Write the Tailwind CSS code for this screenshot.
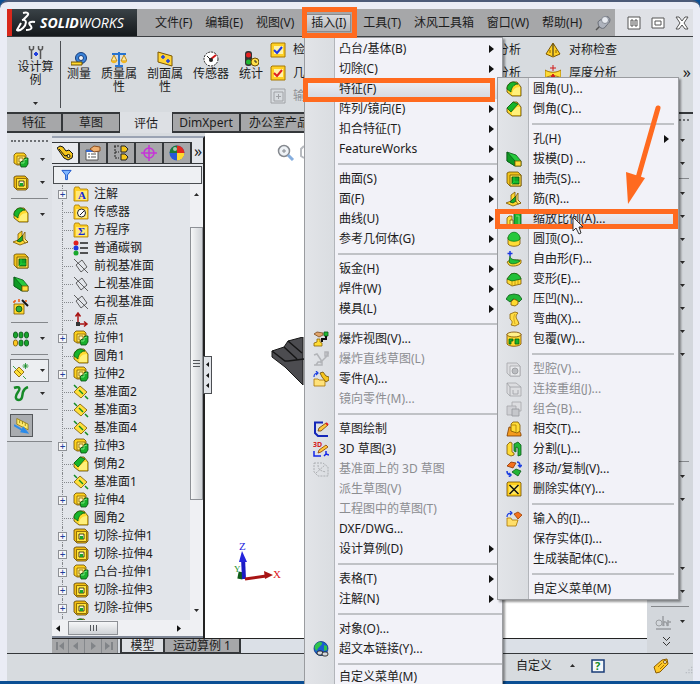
<!DOCTYPE html>
<html lang="zh-CN">
<head>
  <meta charset="UTF-8">
  <meta name="viewport" content="width=device-width, initial-scale=1.0">
  <title>SolidWorks</title>
  <script src="https://cdn.jsdelivr.net/npm/@tailwindcss/browser@4"></script>
</head>
<body class="bg-[#0b4f94] font-['Noto_Sans','Noto_Sans_CJK_SC',sans-serif] text-xs text-[#1c1c1c] [&_use]:[stroke-width:0.8]">

  <!-- Icon library -->
  <svg class="hidden" aria-hidden="true">
    <symbol id="boss" viewBox="0 0 16 16"><path d="M1 3l2-2h8l2 2v7l-2 3H4l-3-2z" fill="#ffd21e" stroke="#6b4b00"/><path d="M4 4h8v8H4z" fill="#ffea6a" stroke="#8b6200"/><path d="M6 6h4v4H6z" fill="#fff8c0" stroke="#8b6200"/><path d="M7 11l2-2h2V7l1-1h3v6l-2 3H8z" fill="#18b02c" stroke="#064d10"/><path d="M8 11h3V8l3-1" fill="none" stroke="#8df08f"/></symbol>
    <symbol id="cut" viewBox="0 0 16 16"><path d="M1 2l2-1h9l3 3v9l-2 2H4l-3-3z" fill="#f2bd14" stroke="#5e4200"/><path d="M3.500 3.500h10v10h-10z" fill="#ffe43c" stroke="#7a5800"/><path d="M6 6h5v5H6z" fill="#fffbd0" stroke="#1f1a00"/><path d="M7 8h3v3H7z" fill="#18a62c"/></symbol>
    <symbol id="fillet" viewBox="0 0 16 16"><path d="M1 7c0-3 3-6 6-6h4l4 5v9H6l-5-4z" fill="#ffd92e" stroke="#5b4500"/><path d="M1 8c0-4 3-7 7-7l4 2C8 3 5 7 5 11z" fill="#17b52b" stroke="#075f12"/><path d="M6 14c0-5 3-8 8-8v8z" fill="#fff07a"/></symbol>
    <symbol id="chamfer" viewBox="0 0 16 16"><path d="M1 7L7 1h4l4 5v9H6l-5-4z" fill="#ffd92e" stroke="#5b4500"/><path d="M1 7l6-6 5 2-7 8z" fill="#17b52b" stroke="#075f12"/><path d="M6 14v-3l5-5h3v8z" fill="#fff07a"/></symbol>
    <symbol id="draft" viewBox="0 0 16 16"><path d="M1 1l9 3 5 6v5H9l-8-5z" fill="#27cb3d" stroke="#0a5b16"/><path d="M1 1l8 9v5l-8-5z" fill="#0e9a23" stroke="#0a5b16"/><path d="M9 10h6v5H9z" fill="#ffdf3b" stroke="#7a5600"/></symbol>
    <symbol id="shell" viewBox="0 0 16 16"><path d="M1 2l2-1h9l3 3v11H4l-3-3z" fill="#f2c41c" stroke="#6e5000"/><path d="M4 4h11v11H4z" fill="#ffe14a" stroke="#6e5000"/><path d="M6 6h7v7H6z" fill="#12a526" stroke="#064f10"/><path d="M8 6v5l-2 2m2-2h5" stroke="#1fe03c" fill="none"/></symbol>
    <symbol id="rib" viewBox="0 0 16 16"><path d="M0 12l5-2V4l4-3v9l3-1 3 3-8 3z" fill="#ffd731" stroke="#7b5600"/><path d="M4 11l6-6v5l-3 2z" fill="#17ad2b" stroke="#075314"/><path d="M10 5l2-3v7l3 3-3 1-2-3z" fill="#ffe978" stroke="#7b5600"/></symbol>
    <symbol id="scale" viewBox="0 0 16 16"><path d="M1 7l2-2h3v9H1z" fill="#ffdf3b" stroke="#7b5600"/><path d="M4 9h3v5H4z" fill="#fff6a8" stroke="#7b5600"/><path d="M8 3l2-2h5v12l-2 2H8z" fill="#1db532" stroke="#075314"/><path d="M10 5h3v9" fill="none" stroke="#8af08f"/></symbol>
    <symbol id="dome" viewBox="0 0 16 16"><path d="M2 6v7c2 3 10 3 12 0V6z" fill="#ffdc36" stroke="#7b5600"/><path d="M2 8c0-9 12-9 12 0-2 3-10 3-12 0z" fill="#25c83b" stroke="#0b7a1a"/></symbol>
    <symbol id="freeform" viewBox="0 0 16 16"><path d="M1 11l3-2h11v3c-2 3-9 4-12 2z" fill="#ffdc36" stroke="#7b5600"/><path d="M4 5c0 3 3 4 8 4l2 1c-3 3-9 4-11 1z" fill="#20c038" stroke="#0b6619"/><path d="M4 0v5M1.500 2.500h5" stroke="#1a35e0" stroke-width="1.500"/></symbol>
    <symbol id="deform" viewBox="0 0 16 16"><path d="M1 8l4-5c5-2 9 1 10 5v5l-9 2-5-3z" fill="#ffdc36" stroke="#7b5600"/><path d="M1 8l4-5c5-2 9 1 10 5l-9 2z" fill="#20c038" stroke="#0b6619"/><path d="M6 10v4M9 10v4M12 9v4" stroke="#b88a00"/></symbol>
    <symbol id="indent" viewBox="0 0 16 16"><path d="M0 8l3-4 5-1 5 1 3 4-3 3-3-2-3-1-3 3z" fill="#22b637" stroke="#0a5b17"/><path d="M5 11l3-3 4 2v3l-3 2-4-1z" fill="#ffd92e" stroke="#7b5600"/></symbol>
    <symbol id="flex" viewBox="0 0 16 16"><path d="M4 3l5-2 3 1c-3 3-2 5 0 8l1 3-4 2-4-1c2-3 1-4-1-6z" fill="#ffdc46" stroke="#8b6200"/><path d="M9 3c-2 3-1 6 0 10" fill="none" stroke="#c99a10"/></symbol>
    <symbol id="wrap" viewBox="0 0 16 16"><path d="M1 3v10c2 3 12 3 14 0V3z" fill="#ffd92e" stroke="#7b4a00"/><ellipse cx="8" cy="3.500" rx="7" ry="2.500" fill="#fff08a" stroke="#7b4a00"/><path d="M3 8h4v2H5v3H3zM9 8h4v5H9z" fill="#17b52b" stroke="#075f12"/></symbol>
    <symbol id="cavity" viewBox="0 0 16 16"><path d="M1 2h10l3 3v10H4l-3-3z" fill="#dcdde0" stroke="#a4a6aa"/><path d="M4 5h10v10H4z" fill="#e8e9ec" stroke="#a4a6aa"/><circle cx="9" cy="10" r="3" fill="#bbbdc1" stroke="#96989c"/></symbol>
    <symbol id="rejoin" viewBox="0 0 16 16"><path d="M1 2h9l5 4v9H4l-3-3z" fill="#dcdde0" stroke="#a4a6aa"/><path d="M4 6v9M1 2l3 4h11M7 9v4h5V9" fill="none" stroke="#9d9fa3"/></symbol>
    <symbol id="combine" viewBox="0 0 16 16"><path d="M6 1h9v9H6z" fill="#dcdde0" stroke="#a4a6aa"/><path d="M1 5h9v9H1z" fill="#d0d1d5" stroke="#a4a6aa"/><path d="M6 8h7v7H6z" fill="#c5c7cb" stroke="#96989c"/></symbol>
    <symbol id="intersect" viewBox="0 0 16 16"><path d="M1 15l2-9 9 1 3 6v2z" fill="#f49b1d" stroke="#7b3a00"/><path d="M5 3l2-2h5l2 3v6l-3 2-6-2z" fill="#ffdc36" stroke="#7b5600"/><path d="M5 4h5v7" fill="none" stroke="#a97a00"/></symbol>
    <symbol id="split" viewBox="0 0 16 16"><path d="M1 4l3-3 2 1v9l2 1v2l-3 1-4-2z" fill="#ffdc36" stroke="#7b5600"/><path d="M8 3l4-2 3 3v10l-3 1V7l-2-1v5L8 10z" fill="#22b637" stroke="#0a5b17"/></symbol>
    <symbol id="move" viewBox="0 0 16 16"><path d="M1 5l4-4 5 1-3 5z" fill="#f4701d" stroke="#8d3500"/><path d="M6 11l4-3 5 2-3 5z" fill="#22b637" stroke="#0a5b17"/><path d="M11 1c2 0 3 2 3 4m-2-1l2 2 2-2M1 10c0 3 1 4 4 4m-2-2l2 2-2 2" fill="none" stroke="#1d3fe0" stroke-width="1.500"/></symbol>
    <symbol id="delete" viewBox="0 0 16 16"><path d="M1 2l1-1h12l1 1v13H1z" fill="#ffcf1f" stroke="#6e4c00"/><path d="M3 4h10v9H3z" fill="#ffe65c"/><path d="M3.500 4l9 9m0-9l-9 9" stroke="#111" stroke-width="1.500"/></symbol>
    <symbol id="import" viewBox="0 0 16 16"><path d="M1 7h4l1 2h6l-2 6H1z" fill="#ffdf6a" stroke="#a87400"/><path d="M8 3l4-2 4 3-4 4z" fill="#f4701d" stroke="#9b3c00"/><path d="M1 6c0-3 2-4 5-4M4 0l2 2-2 2" fill="none" stroke="#1d3fe0" stroke-width="1.200"/></symbol>
    <symbol id="explode" viewBox="0 0 16 16"><path d="M1 3l3-2 6 1v2l-4 2z" fill="#e0a46a" stroke="#7b4a20"/><path d="M11 1h4v4h-4z" fill="#1fb935" stroke="#0a5b17"/><path d="M13 5v3H9v3" fill="none" stroke="#111" stroke-width="2"/><path d="M1 12l3-1V8h3v3l2 1v3H1z" fill="#ffdc36" stroke="#8b6200"/></symbol>
    <symbol id="explode-line" viewBox="0 0 16 16"><path d="M1 4l3-1 4 6v2l6-6V2h2M1 14h8v-3H5l-2 3M12 1h3v4h-3z" fill="none" stroke="#b2b4b8" stroke-width="1.500"/></symbol>
    <symbol id="part" viewBox="0 0 16 16"><path d="M1 8h4l1 1h6v6H1z" fill="#ffe27a" stroke="#a87400"/><path d="M7 2l3-1 3 4 3 1v3l-3 2-4-5z" fill="#f6c51e" stroke="#6e4c00"/><path d="M1 6c0-3 1-4 4-4M3 0l2 2-2 2" fill="none" stroke="#1d3fe0" stroke-width="1.200"/></symbol>
    <symbol id="sketch" viewBox="0 0 16 16"><path d="M10 1.500H2V12l3 3h10" fill="none" stroke="#1426b8" stroke-width="2"/><path d="M5 10l1-3 7-5 2 2-7 6z" fill="#ffc83c" stroke="#6e3c00"/><path d="M13 2l2 2" stroke="#e02020" stroke-width="2"/></symbol>
    <symbol id="sketch3d" viewBox="0 0 16 16"><path d="M1 10v5h7m3 0l2-2v-3m0 3l3 1" fill="none" stroke="#1426e8" stroke-width="1.500"/><path d="M5 12l1-3 7-5 2 2-7 5z" fill="#ffc83c" stroke="#8e3c00"/><text x="0" y="6" font-size="7" font-weight="bold" fill="#d42020">3D</text></symbol>
    <symbol id="plane-sketch" viewBox="0 0 16 16"><path d="M1 2h9l5 4v9H5L1 11zM3 12l9-8M5 4c0 5 3 6 8 7" fill="none" stroke="#a0a2a6" stroke-dasharray="2 1"/></symbol>
    <symbol id="globe" viewBox="0 0 16 16"><circle cx="8" cy="7.500" r="7" fill="#1b5fd0" stroke="#113c80"/><path d="M3 3c3-3 7-2 6 0S4 7 4 10C1 8 1 5 3 3zM11 4l3 1v4l-3 1z" fill="#2fc44a"/><rect x="4" y="10" width="6" height="4" rx="2" fill="#d5d8dc" stroke="#111"/><rect x="9" y="11" width="6" height="4" rx="2" fill="#d5d8dc" stroke="#111"/></symbol>
    <symbol id="plane" viewBox="0 0 16 16"><path d="M1 1l3 3m8 8l3 3" stroke="#138a22" stroke-width="1.500"/><path d="M1 8l6-6 7 6-6 6z" fill="#ffe03a" stroke="#7b5600"/><path d="M6 6l4 4" stroke="#138a22" stroke-width="1.500"/></symbol>
    <symbol id="ref-plane" viewBox="0 0 16 16"><path d="M1 1l14 14M3 7l6-5 5 7-6 5z" fill="none" stroke="#3c3c3c"/></symbol>
    <symbol id="folder" viewBox="0 0 16 16"><path d="M1 3l1-2h4l1 2h7l1 1v11H1z" fill="#ffcf26" stroke="#a87800"/><path d="M3 5h11v9H3z" fill="#ffe978"/></symbol>
    <symbol id="origin" viewBox="0 0 16 16"><path d="M5 12V2M2.500 4.500L5 1l2.500 3.500M6 12h7m-2-2.500l3 2.500-3 2.500" fill="none" stroke="#a81414" stroke-width="1.500"/><path d="M3 10h4v4H3z" fill="#333"/></symbol>
    <symbol id="material" viewBox="0 0 16 16"><circle cx="3" cy="3" r="2.500" fill="#e02020"/><circle cx="3" cy="8" r="2.500" fill="#2038e0"/><circle cx="3" cy="13" r="2.500" fill="#18a82c"/><path d="M7 3h8M7 8h8M7 13h8" stroke="#222" stroke-width="1.500"/></symbol>
    <symbol id="wizard" viewBox="0 0 16 16"><path d="M1 5h10v10H1z" fill="#ffd92e" stroke="#7b5600"/><circle cx="6" cy="10" r="3" fill="#2cae3c" stroke="#0a4b14"/><path d="M9 1l6 6" stroke="#111" stroke-width="2"/><path d="M2 1v2M6 0v3M0 3h2M13 1v2" stroke="#f05a10" stroke-width="1.500"/></symbol>
    <symbol id="pattern" viewBox="0 0 16 16"><g fill="#17a42b" stroke="#075314"><rect x="0.500" y="1" width="4" height="6" rx="2"/><rect x="6" y="1" width="4" height="6" rx="2"/><rect x="11.500" y="1" width="4" height="6" rx="2"/><rect x="6" y="9" width="4" height="6" rx="2"/><rect x="11.500" y="9" width="4" height="6" rx="2"/></g><rect x="0.500" y="9" width="4" height="6" rx="2" fill="#ffc81e" stroke="#7b5600"/></symbol>
    <symbol id="plane-star" viewBox="0 0 16 16"><path d="M0 3l3 3m7 7l3 3M12.500 0v6M9.500 3h6M10.500 1l4 4m0-4l-4 4" stroke="#138a22"/><path d="M1 9l5-5 5 5-5 5z" fill="#ffe03a" stroke="#7b5600"/><path d="M4 7l4 4" stroke="#7b5600"/></symbol>
    <symbol id="curve" viewBox="0 0 16 16"><path d="M1 2c5-2 7 0 4 4s-3 8 1 8 3-5 4-8 2-4 5-5" fill="none" stroke="#168a28" stroke-width="2.500"/></symbol>
    <symbol id="instant" viewBox="0 0 16 16"><path d="M3 0l12 6v6L3 6z" fill="#ffe96b" stroke="#8b7400"/><path d="M6 2v3m3-2v3m3-1v3" stroke="#8b7400"/><path d="M0 7l10 6m0-3l4 5-6-1z" fill="#2b8bea" stroke="#2b8bea" stroke-width="2"/></symbol>
    <symbol id="down" viewBox="0 0 5 3"><path d="M0 0h5L2.500 3z" fill="#2b2b2b"/></symbol>
    <symbol id="right" viewBox="0 0 5 8"><path d="M0 0l5 4-5 4z" fill="#111"/></symbol>
  </svg>

  <div class="relative flex h-screen flex-col overflow-hidden pb-[3px]">
    <div class="flex min-h-0 flex-1 flex-col rounded-t-lg border-t-2 border-[#4c5a78] bg-[#eaecf5] px-[7px] pt-[7px]">

      <!-- Title and menu bar -->
      <header class="flex h-7 shrink-0 border-b border-[#3c3f43] bg-[#dfe1e6]">
        <div class="flex w-[130px] items-center gap-1 border-l-[5px] border-[#d8281c] bg-linear-to-b from-[#3a4247] to-[#15191c] pl-1 text-white">
          <svg class="h-6 w-5" viewBox="0 0 20 24" fill="none" stroke="#fff" stroke-width="2"><path d="M7 2c4-1 7 0 4 3L7 9M6 9c5-1 5 4 1 8-2 2-4 3-6 2l4-7M19 11c-5-1-7 1-5 3s3 5-4 5"/></svg>
          <span class="font-['Open_Sans'] text-sm italic"><b>SOLID</b>WORKS</span>
        </div>
        <nav class="flex flex-1 items-center justify-between bg-[#a6a7a9] pr-1 pl-[18px] whitespace-nowrap">
          <button>文件(F)</button>
          <button>编辑(E)</button>
          <button>视图(V)</button>
          <button class="bg-linear-to-b from-[#dcdde0] to-[#b4b5b8] px-1 outline outline-[#8a8b8e]">插入(I)</button>
          <button>工具(T)</button>
          <button>沐风工具箱</button>
          <button>窗口(W)</button>
          <button>帮助(H)</button>
          <svg class="h-4 w-4" viewBox="0 0 16 16"><path d="M1 15l5-5" stroke="#555" stroke-width="1.500"/><path d="M3 7c1-2 3-2 4-3 2-4 8-3 8 1 0 3-3 4-4 6s-3 3-5 2-3-3-3-6z" fill="#aeb3bd" stroke="#6a6f79"/><circle cx="10" cy="5" r="3.500" fill="#e8ebf1" stroke="#858a94"/></svg>
        </nav>
        <div class="flex w-[78px] items-center justify-between pr-1 pl-3">
          <button aria-label="平铺"><svg class="h-[14px] w-[14px]" viewBox="0 0 14 14" fill="#fff" stroke="#555"><path d="M1 1h12v12H1zM4 4h2v6H4zM8 4h2v6H8z"/></svg></button>
          <button aria-label="最大化"><svg class="h-[14px] w-[14px]" viewBox="0 0 14 14" fill="#fff" stroke="#555"><path d="M1 2h12v10H1zM4 5h6v4H4z"/></svg></button>
          <button aria-label="关闭"><svg class="h-[14px] w-[14px]" viewBox="0 0 14 14" fill="#fff" stroke="#555"><path d="M1 1h3l3 4 3-4h3L9 7l4 6h-3L7 9l-3 4H1l4-6z"/></svg></button>
        </div>
      </header>

      <!-- Ribbon -->
      <section class="flex h-[75px] shrink-0 overflow-hidden bg-[#d7dbdf] leading-[13px]">
        <button class="flex w-[53px] shrink-0 flex-col items-center pt-[7px] pl-1">
          <svg class="h-4 w-4" viewBox="0 0 16 16"><path d="M3.500 6v9M12.500 6v9M1.500 2v2a2 2 0 104 0V2M10.500 2v2a2 2 0 104 0V2" fill="none" stroke="#555" stroke-width="1.500"/><path d="M6 10h4M8 8v4" stroke="#2040e0" stroke-width="2"/></svg>
          <span class="w-9">设计算例</span>
          <svg class="mt-4 h-[3px] w-[5px]"><use href="#down"/></svg>
        </button>
        <div class="my-1 flex shrink-0 items-start gap-[10px] border-l border-[#4b4e52] pt-[10px] pl-[6px]">
          <button class="flex w-6 flex-col items-center"><svg class="h-4 w-4" viewBox="0 0 16 16"><circle cx="10" cy="7" r="5.500" fill="#3a83d8" stroke="#153c7c"/><circle cx="10" cy="7" r="2.500" fill="#f2f4f7" stroke="#153c7c"/><path d="M0 11h11v3H0z" fill="#ffd92e" stroke="#6e5000"/></svg>测量</button>
          <button class="flex w-9 flex-col items-center"><svg class="h-4 w-4" viewBox="0 0 16 16"><path d="M8 1v13M4 15h8M1 3h14" stroke="#2874d0" stroke-width="2"/><path d="M3 4L0 10h6zM13 4l-3 6h6z" fill="#ffe9a0" stroke="#c08a10"/><path d="M0 10c1 3 5 3 6 0zM10 10c1 3 5 3 6 0z" fill="#f2b61c"/></svg>质量属性</button>
          <button class="flex w-9 flex-col items-center"><svg class="h-4 w-4" viewBox="0 0 16 16"><path d="M1 1l14 4v10L1 11z" fill="#ffd438" stroke="#7b5600"/><path d="M4 6h4m-2-2v4M9 10h4m-2-2v4" stroke="#1d3fe0" stroke-width="1.500"/></svg>剖面属性</button>
          <button class="flex w-9 flex-col items-center"><svg class="h-4 w-4" viewBox="0 0 16 16"><circle cx="8" cy="8" r="7" fill="#fff" stroke="#222" stroke-dasharray="2 1"/><path d="M8 8l5-4" stroke="#d01818" stroke-width="2"/><path d="M4 5l4 4" stroke="#222"/><circle cx="8" cy="9" r="2" fill="#222"/></svg>传感器</button>
          <button class="flex w-6 flex-col items-center"><svg class="h-4 w-4" viewBox="0 0 16 16"><rect x="2" y="0" width="7" height="15" rx="3" fill="#333"/><circle cx="5.500" cy="4" r="2.500" fill="#e82020"/><circle cx="5.500" cy="11" r="2.500" fill="#20b830"/><circle cx="12" cy="11" r="4" fill="#ffe04a" stroke="#6e5000"/><path d="M12 9v2h2" fill="none" stroke="#222"/></svg>统计</button>
        </div>
        <ul class="flex w-[258px] shrink-0 flex-col gap-[7px] pt-[5px] pl-[7px] leading-4">
          <li class="flex justify-between"><button class="flex gap-[7px]"><svg class="h-4 w-4" viewBox="0 0 16 16"><path d="M1 2l1-1h13v14H1z" fill="#ffd024" stroke="#a87800"/><path d="M4 4h9v8H4z" fill="#fff3a8"/><path d="M4 8l3 3 5-6" fill="none" stroke="#2038e0" stroke-width="2"/></svg>检</button><button>分析</button></li>
          <li class="flex justify-between"><button class="flex gap-[7px]"><svg class="h-4 w-4" viewBox="0 0 16 16"><path d="M1 2l1-1h13v14H1z" fill="#ffd024" stroke="#a87800"/><path d="M4 4h9v8H4z" fill="#fff3a8"/><path d="M4 8l3 3 5-6" fill="none" stroke="#e02020" stroke-width="2"/></svg>几</button><button>分析</button></li>
          <li><button class="flex gap-[7px] text-[#909296]" disabled><svg class="h-4 w-4" viewBox="0 0 16 16" fill="none" stroke="#a0a2a6"><path d="M1 1h14v14H1zM4 4h9v9H4zM8.500 6v5M6 8.500h5"/></svg>输</button></li>
        </ul>
        <div class="flex flex-1 justify-between pt-[5px] pl-6 leading-4">
          <ul class="flex flex-col gap-[7px]">
            <li><button class="flex gap-2"><svg class="h-4 w-4" viewBox="0 0 16 16"><path d="M8 1l7 11-7 3-7-3z" fill="#ffd024" stroke="#7b5600"/><path d="M8 2v12" stroke="#222"/><path d="M5 8v3M11 8v3" stroke="#8b6200"/></svg>对称检查</button></li>
            <li><button class="flex gap-2"><svg class="h-4 w-4" viewBox="0 0 16 16"><path d="M0 5c5 3 11 3 16 0v8c-5-3-11-3-16 0z" fill="#ffdc36" stroke="#a87800"/><path d="M8 0v6M5 3h6M6 12l2-3 2 3z" fill="#d01818" stroke="#d01818"/></svg>厚度分析</button></li>
          </ul>
          <button class="mt-[18px] h-6 pr-0.5 text-base">»</button>
        </div>
      </section>

      <!-- Ribbon tabs -->
      <nav class="flex h-[21px] shrink-0 border-t-2 border-[#34373a] bg-[#d7dbdf] leading-[17px] whitespace-nowrap">
        <button class="h-[19px] w-14 border-r-2 border-b-2 border-[#34373a] bg-[#a6a7a9]">特征</button>
        <button class="h-[19px] w-14 border-b-2 border-[#34373a] bg-[#a6a7a9]">草图</button>
        <button class="-mt-0.5 h-[23px] w-[54px] border-x border-b border-[#34373a] bg-[#dde0e4]">评估</button>
        <button class="h-[19px] w-[68px] border-r-2 border-b-2 border-[#34373a] bg-[#a6a7a9]">DimXpert</button>
        <button class="h-[19px] w-[76px] border-b-2 border-[#34373a] bg-[#a6a7a9]">办公室产品</button>
      </nav>

      <main class="flex min-h-0 flex-1 border-b border-[#34373a] bg-[#d7dbdf]">
        <!-- Feature toolbar -->
        <aside class="flex w-[45px] shrink-0 flex-col bg-[#d3d7dc]">
          <div class="flex flex-col border-b border-[#84878b] bg-[#dee1e6] pt-[7px] pb-1 [&_button]:flex [&_button]:h-[23px] [&_button]:items-center [&_button]:justify-between [&_button]:pr-[7px] [&_button]:pl-[6px] [&_button>svg:first-child]:size-4 [&_hr]:mx-1 [&_hr]:my-1 [&_hr]:h-0 [&_hr]:border-[#84878b]">
            <span class="mx-1 mb-[6px] border-t-2 border-dotted border-[#6d7074]"></span>
            <button aria-label="拉伸"><svg><use href="#boss"/></svg><svg class="h-[3px] w-[5px]"><use href="#down"/></svg></button>
            <button aria-label="切除"><svg><use href="#cut"/></svg><svg class="h-[3px] w-[5px]"><use href="#down"/></svg></button>
            <hr>
            <button aria-label="圆角"><svg><use href="#fillet"/></svg><svg class="h-[3px] w-[5px]"><use href="#down"/></svg></button>
            <button aria-label="筋"><svg><use href="#rib"/></svg></button>
            <button aria-label="抽壳"><svg><use href="#shell"/></svg></button>
            <button aria-label="拔模"><svg><use href="#draft"/></svg></button>
            <button aria-label="异型孔"><svg><use href="#wizard"/></svg></button>
            <hr>
            <button aria-label="阵列"><svg><use href="#pattern"/></svg><svg class="h-[3px] w-[5px]"><use href="#down"/></svg></button>
            <hr>
            <button aria-label="参考几何体" class="mx-[3px] border border-[#7b7e82] bg-[#eceef1] pr-[3px]! pl-0.5!"><svg><use href="#plane-star"/></svg><svg class="h-[3px] w-[5px]"><use href="#down"/></svg></button>
            <button aria-label="曲线"><svg><use href="#curve"/></svg><svg class="h-[3px] w-[5px]"><use href="#down"/></svg></button>
            <hr>
            <button aria-label="Instant3D" class="ml-[3px] w-[23px] border border-[#55585c] bg-[#a9acb0] px-[3px]!"><svg><use href="#instant"/></svg></button>
          </div>
        </aside>

        <div class="flex min-w-0 flex-1 flex-col">
          <div class="flex min-h-0 flex-1">
            <!-- Feature tree -->
            <section class="mt-[3px] flex w-[153px] shrink-0 flex-col border-t-2 border-r-2 border-t-[#9aa3b3] border-r-[#222] bg-[#e2e5ea]">
              <div class="mt-1 flex h-[22px] shrink-0 items-stretch border-b border-[#34373a] [&>button]:flex [&>button]:w-7 [&>button]:items-center [&>button]:justify-center [&>button]:border-t [&>button]:border-r-2 [&>button]:border-[#34373a] [&_svg]:size-4">
                <button class="bg-[#e8eaee]" aria-label="设计树"><svg viewBox="0 0 16 16"><path d="M0 3l3-2 3 1 3 4 3-1 4 4-1 4-4 2-4-2z" fill="#f5c51a" stroke="#111"/><path d="M2 4l6 7 3-1" fill="none" stroke="#111"/><circle cx="11.500" cy="11" r="1.500" fill="#fff6a0" stroke="#111"/></svg></button>
                <button class="bg-[#a6a7a9]" aria-label="属性"><svg viewBox="0 0 16 16"><path d="M1 5h12v10H1z" fill="#fff" stroke="#555"/><path d="M1 5h12v2H1z" fill="#3a6bd0"/><path d="M3 9h2m1 0h5M3 12h2m1 0h5" stroke="#555"/><path d="M5 4l4-3 6 1v4L9 7z" fill="#f0b070" stroke="#8b5020"/></svg></button>
                <button class="bg-[#a6a7a9]" aria-label="配置"><svg viewBox="0 0 16 16"><path d="M1 1h5M2 1v12h4M2 7h4" fill="none" stroke="#222" stroke-dasharray="2 1"/><path d="M8 1h4l3 3-2 3H8zM8 9h4l3 3-2 3H8z" fill="#f5c51a" stroke="#222"/></svg></button>
                <button class="bg-[#a6a7a9]" aria-label="尺寸专家"><svg viewBox="0 0 16 16"><circle cx="8" cy="8" r="5" fill="none" stroke="#c634d8" stroke-width="1.500"/><path d="M8 0v16M0 8h16" stroke="#c634d8" stroke-width="1.500"/></svg></button>
                <button class="bg-[#a6a7a9]" aria-label="外观"><svg viewBox="0 0 16 16"><circle cx="8" cy="8" r="7.500" fill="#2a58d8"/><path d="M8 8V.5A7.500 7.500 0 00.5 8z" fill="#1d7a38"/><path d="M8 8V.5A7.500 7.500 0 0115.500 8z" fill="#e02a20"/><path d="M8 8h7.500A7.500 7.500 0 018 15.500z" fill="#ffd92e"/><circle cx="6" cy="4" r="2" fill="#fff" opacity=".6"/></svg></button>
                <span class="pl-0.5 text-base leading-[18px]">»</span>
              </div>
              <label class="mx-px mt-0.5 flex h-[18px] shrink-0 items-center border border-[#4b4e52] bg-[#eef0f3] pl-[7px]">
                <svg class="h-3 w-3" viewBox="0 0 12 12"><path d="M1 1h10L7 6v5H5V6z" fill="#7fb6ff" stroke="#1450c8"/></svg>
                <input class="w-full min-w-0 pl-1 outline-none" aria-label="筛选">
              </label>
              <div class="flex min-h-0 flex-1">
                <ul class="min-w-0 flex-1 overflow-hidden pt-px pl-[6px] whitespace-nowrap [&_i]:-ml-px [&_i]:w-[11px] [&_i]:border-t [&_i]:border-dotted [&_i]:border-[#85888c] [&_li]:ml-1 [&_li]:flex [&_li]:h-[18px] [&_li]:items-center [&_li]:border-l [&_li]:border-dotted [&_li]:border-[#85888c] [&_li>svg]:mr-[5px] [&_li>svg]:size-4 [&_button]:-ml-[5px] [&_button]:mr-1.5 [&_button]:size-[9px] [&_button]:shrink-0 [&_button]:border [&_button]:border-[#8e9196] [&_button]:bg-[#f6f7f9] [&_button]:text-center [&_button]:text-[10px] [&_button]:leading-[6px] [&_button]:text-[#1d3f9c]">
                  <li><button>+</button><svg viewBox="0 0 16 16"><use href="#folder"/><text x="5" y="13" font-family="Liberation Serif" font-size="11" font-weight="bold" fill="#1426d8">A</text></svg>注解</li>
                  <li><i></i><svg viewBox="0 0 16 16"><use href="#folder"/><circle cx="8.500" cy="9" r="4" fill="#fff" stroke="#222"/><path d="M7 11l4-4" stroke="#222"/></svg>传感器</li>
                  <li><i></i><svg viewBox="0 0 16 16"><use href="#folder"/><text x="5" y="13" font-family="Liberation Serif" font-size="11" font-weight="bold" fill="#1426d8">Σ</text></svg>方程序</li>
                  <li><i></i><svg><use href="#material"/></svg>普通碳钢</li>
                  <li><i></i><svg><use href="#ref-plane"/></svg>前视基准面</li>
                  <li><i></i><svg><use href="#ref-plane"/></svg>上视基准面</li>
                  <li><i></i><svg><use href="#ref-plane"/></svg>右视基准面</li>
                  <li><i></i><svg><use href="#origin"/></svg>原点</li>
                  <li><button>+</button><svg><use href="#boss"/></svg>拉伸1</li>
                  <li><i></i><svg><use href="#fillet"/></svg>圆角1</li>
                  <li><button>+</button><svg><use href="#boss"/></svg>拉伸2</li>
                  <li><i></i><svg><use href="#plane"/></svg>基准面2</li>
                  <li><i></i><svg><use href="#plane"/></svg>基准面3</li>
                  <li><i></i><svg><use href="#plane"/></svg>基准面4</li>
                  <li><button>+</button><svg><use href="#boss"/></svg>拉伸3</li>
                  <li><i></i><svg><use href="#chamfer"/></svg>倒角2</li>
                  <li><i></i><svg><use href="#plane"/></svg>基准面1</li>
                  <li><button>+</button><svg><use href="#boss"/></svg>拉伸4</li>
                  <li><i></i><svg><use href="#fillet"/></svg>圆角2</li>
                  <li><button>+</button><svg><use href="#cut"/></svg>切除-拉伸1</li>
                  <li><button>+</button><svg><use href="#cut"/></svg>切除-拉伸4</li>
                  <li><button>+</button><svg><use href="#boss"/></svg>凸台-拉伸1</li>
                  <li><button>+</button><svg><use href="#cut"/></svg>切除-拉伸3</li>
                  <li><button>+</button><svg><use href="#cut"/></svg>切除-拉伸5</li>
                  <li><i></i><svg><use href="#fillet"/></svg></li>
                </ul>
                <div class="flex w-[13px] shrink-0 flex-col items-center bg-[#eff0f3] pt-[9px] pb-2">
                  <svg class="h-[3px] w-[5px] rotate-180"><use href="#down"/></svg>
                  <div class="mt-[31px] mb-[109px] flex w-full flex-1 flex-col items-center justify-center gap-0.5 border border-[#8e9196] bg-linear-to-r from-[#f6f7f8] to-[#cfd2d6]">
                    <span class="h-px w-[7px] bg-[#55585c]"></span><span class="h-px w-[7px] bg-[#55585c]"></span><span class="h-px w-[7px] bg-[#55585c]"></span>
                  </div>
                  <svg class="h-[3px] w-[5px]"><use href="#down"/></svg>
                </div>
              </div>
              <div class="flex h-[18px] shrink-0 items-center border-b-2 border-[#7f8796] bg-[#eff0f3] pr-[22px] pl-1">
                <svg class="h-[7px] w-1 rotate-180"><use href="#right"/></svg>
                <div class="mr-auto ml-2 flex h-[14px] w-[50px] items-center justify-center gap-0.5 border border-[#8e9196] bg-linear-to-b from-[#f6f7f8] to-[#cfd2d6]">
                  <span class="h-[6px] w-px bg-[#55585c]"></span><span class="h-[6px] w-px bg-[#55585c]"></span><span class="h-[6px] w-px bg-[#55585c]"></span>
                </div>
                <svg class="h-[7px] w-1"><use href="#right"/></svg>
              </div>
            </section>

            <!-- Graphics area -->
            <section class="relative flex-1 bg-white">
              <svg class="absolute top-[11px] left-[72px] h-[17px] w-[30px]" viewBox="0 0 30 17"><circle cx="7" cy="7" r="5.500" fill="#eef2f6" stroke="#85898f" stroke-width="1.500"/><path d="M5 7h4M7 5v4" stroke="#85898f"/><path d="M11 11l5 5" stroke="#86aede" stroke-width="3"/><path d="M27 2l-3 3v7l3 2" fill="none" stroke="#b8bbc0" stroke-width="2"/></svg>
              <button class="absolute top-[223px] -left-0.5 flex h-[38px] w-[9px] flex-col items-center justify-evenly border border-[#4b4e52] bg-[#e2e5ea]" aria-label="收起">
                <svg class="h-[5px] w-[3px] rotate-180"><use href="#right"/></svg><svg class="h-[5px] w-[3px] rotate-180"><use href="#right"/></svg><svg class="h-[5px] w-[3px] rotate-180"><use href="#right"/></svg>
              </button>
              <svg class="absolute top-[204px] left-[66px] h-12 w-12" viewBox="0 0 48 48"><path d="M1 14v6l13 10 18 18V0L17 4l-4 6z" fill="#4c4c50" stroke="#161616"/><path d="M1 14l13 10h3l16-2M13 10l13 12M17 4l14 12" fill="none" stroke="#161616" stroke-width="1.500"/></svg>
              <svg class="absolute top-[408px] left-[26px] h-11 w-[52px]" viewBox="0 0 52 44" font-family="Liberation Serif" font-size="11"><path d="M12 35l-5-1" stroke="#0f5c18" stroke-width="7"/><path d="M13 38L12 17" stroke="#1b1bc4" stroke-width="4"/><path d="M8 21l3-11 5 11z" fill="#2424dc"/><path d="M14 38l21-3" stroke="#a81414" stroke-width="3"/><path d="M33 30l9 4-8 4z" fill="#a81414"/><text x="8" y="9" fill="#1b1be0">Z</text><text x="3" y="31" fill="#18902a" font-size="9">Y</text><text x="42" y="37" fill="#e02020">X</text></svg>
            </section>
          </div>

          <!-- Model tabs -->
          <nav class="flex h-[15px] shrink-0 border-t border-[#222] bg-[#dbe0e7] leading-[13px] whitespace-nowrap">
            <div class="mr-0.5 flex w-[66px] bg-[#a6a7a9] [&>button]:flex-1 [&>button]:border-r [&>button]:border-[#85888c] [&>button]:text-[#85888c] [&_svg]:mx-auto [&_svg]:size-2">
              <button aria-label="最前"><svg viewBox="0 0 8 8"><path d="M0 0h2v8H0zM8 0v8L3 4z" fill="#818488"/></svg></button>
              <button aria-label="上一个"><svg viewBox="0 0 8 8"><path d="M6 0v8L1 4z" fill="#818488"/></svg></button>
              <button aria-label="下一个"><svg viewBox="0 0 8 8"><path d="M2 0v8l5-4z" fill="#818488"/></svg></button>
              <button aria-label="最后"><svg viewBox="0 0 8 8"><path d="M6 0h2v8H6zM0 0v8l5-4z" fill="#818488"/></svg></button>
            </div>
            <button class="w-[45px] border-x-2 border-b border-[#34373a] bg-[#dde0e4]">模型</button>
            <button class="w-[76px] border-r-2 border-b border-[#34373a] bg-[#a6a7a9]">运动算例 1</button>
          </nav>
        </div>

        <!-- Right toolbar -->
        <aside class="-mt-[19px] flex w-[46px] shrink-0 flex-col items-stretch bg-[#d3d7dc] pt-[5px] [&>button]:flex [&>button]:h-[23px] [&>button]:shrink-0 [&>button]:items-center [&>button]:justify-end [&>button]:pr-2 [&_hr]:mx-1 [&_hr]:my-[3px] [&_hr]:border-[#84878b] [&_svg]:h-[3px] [&_svg]:w-[5px]">
          <span class="mx-1 mb-2 border-t-2 border-dotted border-[#6d7074]"></span>
          <button aria-label="视图"><svg><use href="#down"/></svg></button>
          <button aria-label="显示"><svg><use href="#down"/></svg></button>
          <hr>
          <button aria-label="草图"><svg><use href="#down"/></svg></button>
          <button aria-label="直线"><svg><use href="#down"/></svg></button>
          <button aria-label="矩形"><svg><use href="#down"/></svg></button>
          <button aria-label="槽口"><svg><use href="#down"/></svg></button>
          <button aria-label="圆"><svg><use href="#down"/></svg></button>
          <button aria-label="圆弧"><svg><use href="#down"/></svg></button>
          <button aria-label="样条曲线"><svg><use href="#down"/></svg></button>
          <button aria-label="椭圆"><svg><use href="#down"/></svg></button>
          <div class="h-[92px] shrink-0"></div>
          <hr>
          <button aria-label="剪裁"><svg><use href="#down"/></svg></button>
          <button aria-label="等距"><svg><use href="#down"/></svg></button>
          <div class="h-[46px] shrink-0"></div>
          <button aria-label="几何关系"><svg><use href="#down"/></svg></button>
          <button aria-label="修复"><svg><use href="#down"/></svg></button>
          <hr>
          <button aria-label="快速捕捉" class="justify-between! pl-2"><span><svg class="h-4! w-4!" viewBox="0 0 16 16" fill="none" stroke="#9a9da1"><circle cx="4" cy="9" r="3"/><path d="M8 2v10M9 12c-2-6 4-5 3 0M13 6v6m0-4h3M1 15h15" stroke-width="1.500"/></svg></span><svg><use href="#down"/></svg></button>
          <button aria-label="更多" class="h-4! justify-center!"><span><svg class="h-[9px]! w-[9px]!" viewBox="0 0 9 9" fill="none" stroke="#333"><path d="M1 0l3.500 3.500L8 0M1 5l3.500 3.500L8 5"/></svg></span></button>
        </aside>
      </main>

      <!-- Status bar -->
      <footer class="flex h-[27px] shrink-0 items-center justify-end gap-4 bg-[#d7dbdf] pb-1">
        <button class="flex items-center gap-[18px]">自定义<svg class="h-[3px] w-[5px] rotate-180"><use href="#down"/></svg></button>
        <button aria-label="帮助"><svg class="h-[14px] w-[14px]" viewBox="0 0 14 14"><path d="M1 1h12v12H1z" fill="#f4f8fa" stroke="#1a3c78" stroke-width="1.500"/><text x="4" y="11" font-size="11" font-weight="bold" fill="#128a24">?</text></svg></button>
        <button class="ml-8" aria-label="标签"><svg class="h-4 w-4" viewBox="0 0 16 16"><path d="M1 9l8-7 5-1 1 5-8 8-4 1z" fill="#ffc928" stroke="#8b5c00"/><circle cx="12" cy="4" r="1.500" fill="#fff" stroke="#8b5c00"/><path d="M5 9l4-4m-2 6l4-4" stroke="#a87400"/></svg></button>
        <svg class="mt-2 h-2 w-2" viewBox="0 0 12 12"><path d="M9 1h2v2H9zM5 5h2v2H5zM9 5h2v2H9zM1 9h2v2H1zM5 9h2v2H5zM9 9h2v2H9z" fill="#b9bdc3"/></svg>
      </footer>
    </div>

    <!-- Insert menu -->
    <ul class="absolute top-[37px] left-[304px] w-[199px] border border-[#9a9ca0] bg-[linear-gradient(90deg,#e2e4e8,#dadde1_29px,#b2b5ba_29px,#b2b5ba_30px,#f2f2f8_30px)] pt-px shadow-[2px_2px_2px_#0006] [&_button]:flex [&_button]:h-5 [&_button]:w-full [&_button]:items-center [&_button]:gap-[10px] [&_button]:pr-2 [&_button]:pl-2 [&_button:disabled]:text-[#8c8d91] [&_button>svg]:size-4 [&_i]:w-4 [&_.arrow]:ml-auto [&_.arrow]:h-2! [&_.arrow]:w-[5px]! [&_hr]:my-[4px] [&_hr]:ml-[33px] [&_hr]:border-t-2 [&_hr]:border-[#c0c2c6] [&_li:last-child>button]:h-4">
      <li><button><i></i>凸台/基体(B)<svg class="arrow"><use href="#right"/></svg></button></li>
      <li><button><i></i>切除(C)<svg class="arrow"><use href="#right"/></svg></button></li>
      <li><button class="bg-linear-to-b from-[#f0f1f6] to-[#d4d7e0]"><i></i>特征(F)</button></li>
      <li><button><i></i>阵列/镜向(E)<svg class="arrow"><use href="#right"/></svg></button></li>
      <li><button><i></i>扣合特征(T)<svg class="arrow"><use href="#right"/></svg></button></li>
      <li><button><i></i>FeatureWorks<svg class="arrow"><use href="#right"/></svg></button></li>
      <li><hr></li>
      <li><button><i></i>曲面(S)<svg class="arrow"><use href="#right"/></svg></button></li>
      <li><button><i></i>面(F)<svg class="arrow"><use href="#right"/></svg></button></li>
      <li><button><i></i>曲线(U)<svg class="arrow"><use href="#right"/></svg></button></li>
      <li><button><i></i>参考几何体(G)<svg class="arrow"><use href="#right"/></svg></button></li>
      <li><hr></li>
      <li><button><i></i>钣金(H)<svg class="arrow"><use href="#right"/></svg></button></li>
      <li><button><i></i>焊件(W)<svg class="arrow"><use href="#right"/></svg></button></li>
      <li><button><i></i>模具(L)<svg class="arrow"><use href="#right"/></svg></button></li>
      <li><hr></li>
      <li><button><svg><use href="#explode"/></svg>爆炸视图(V)...</button></li>
      <li><button disabled><svg><use href="#explode-line"/></svg>爆炸直线草图(L)</button></li>
      <li><button><svg><use href="#part"/></svg>零件(A)...</button></li>
      <li><button disabled><i></i>镜向零件(M)...</button></li>
      <li><hr></li>
      <li><button><svg><use href="#sketch"/></svg>草图绘制</button></li>
      <li><button><svg><use href="#sketch3d"/></svg>3D 草图(3)</button></li>
      <li><button disabled><svg><use href="#plane-sketch"/></svg>基准面上的 3D 草图</button></li>
      <li><button disabled><i></i>派生草图(V)</button></li>
      <li><button disabled><i></i>工程图中的草图(T)</button></li>
      <li><button><i></i>DXF/DWG...</button></li>
      <li><button><i></i>设计算例(D)<svg class="arrow"><use href="#right"/></svg></button></li>
      <li><hr></li>
      <li><button><i></i>表格(T)<svg class="arrow"><use href="#right"/></svg></button></li>
      <li><button><i></i>注解(N)<svg class="arrow"><use href="#right"/></svg></button></li>
      <li><hr></li>
      <li><button><i></i>对象(O)...</button></li>
      <li><button><svg><use href="#globe"/></svg>超文本链接(Y)...</button></li>
      <li><hr></li>
      <li><button><i></i>自定义菜单(M)</button></li>
    </ul>

    <!-- Features submenu -->
    <ul class="absolute top-[77px] left-[497px] w-[182px] border border-[#9a9ca0] bg-[linear-gradient(90deg,#e2e4e8,#dadde1_30px,#b2b5ba_30px,#b2b5ba_31px,#f2f2f8_31px)] pt-px shadow-[2px_2px_2px_#0006] [&_button]:flex [&_button]:h-5 [&_button]:w-full [&_button]:items-center [&_button]:gap-[11px] [&_button]:pr-[9px] [&_button]:pl-2 [&_button:disabled]:text-[#8c8d91] [&_button>svg]:size-4 [&_i]:w-4 [&_.arrow]:ml-auto [&_.arrow]:h-2! [&_.arrow]:w-[5px]! [&_hr]:my-[4px] [&_hr]:mr-1 [&_hr]:ml-[34px] [&_hr]:border-t-2 [&_hr]:border-[#c0c2c6]">
      <li><button><svg><use href="#fillet"/></svg>圆角(U)...</button></li>
      <li><button><svg><use href="#chamfer"/></svg>倒角(C)...</button></li>
      <li><hr></li>
      <li><button><i></i>孔(H)<svg class="arrow"><use href="#right"/></svg></button></li>
      <li><button><svg><use href="#draft"/></svg>拔模(D) ...</button></li>
      <li><button><svg><use href="#shell"/></svg>抽壳(S)...</button></li>
      <li><button><svg><use href="#rib"/></svg>筋(R)...</button></li>
      <li><button class="bg-linear-to-b from-[#f0f1f6] to-[#d4d7e0]"><svg><use href="#scale"/></svg>缩放比例(A)...</button></li>
      <li><button><svg><use href="#dome"/></svg>圆顶(O)...</button></li>
      <li><button><svg><use href="#freeform"/></svg>自由形(F)...</button></li>
      <li><button><svg><use href="#deform"/></svg>变形(E)...</button></li>
      <li><button><svg><use href="#indent"/></svg>压凹(N)...</button></li>
      <li><button><svg><use href="#flex"/></svg>弯曲(X)...</button></li>
      <li><button><svg><use href="#wrap"/></svg>包覆(W)...</button></li>
      <li><hr></li>
      <li><button disabled><svg><use href="#cavity"/></svg>型腔(V)...</button></li>
      <li><button disabled><svg><use href="#rejoin"/></svg>连接重组(J)...</button></li>
      <li><button disabled><svg><use href="#combine"/></svg>组合(B)...</button></li>
      <li><button><svg><use href="#intersect"/></svg>相交(T)...</button></li>
      <li><button><svg><use href="#split"/></svg>分割(L)...</button></li>
      <li><button><svg><use href="#move"/></svg>移动/复制(V)...</button></li>
      <li><button><svg><use href="#delete"/></svg>删除实体(Y)...</button></li>
      <li><hr></li>
      <li><button><svg><use href="#import"/></svg>输入的(I)...</button></li>
      <li><button><i></i>保存实体(I)...</button></li>
      <li><button><i></i>生成装配体(C)...</button></li>
      <li><hr></li>
      <li><button><i></i>自定义菜单(M)</button></li>
    </ul>

    <!-- Callouts -->
    <div class="pointer-events-none absolute top-[7px] left-[302px] h-[31px] w-[55px] border-[5px] border-[#ff6a1f]"></div>
    <div class="pointer-events-none absolute top-[78px] left-[303px] h-6 w-48 border-[5px] border-[#ff6a1f]"></div>
    <div class="pointer-events-none absolute top-[209px] left-[495px] h-5 w-[183px] border-[5px] border-[#ff6a1f]"></div>
    <svg class="pointer-events-none absolute top-[104px] left-[620px] h-[104px] w-11" viewBox="0 0 44 104"><path d="M38 4L18 74" stroke="#ff6a1f" stroke-width="5" stroke-linecap="round"/><path d="M6 68l19 6L8 100z" fill="#ff6a1f"/></svg>
    <svg class="pointer-events-none absolute top-[216px] left-[572px] h-[19px] w-3" viewBox="0 0 12 19"><path d="M1 1v14l3-3 3 6 2-1-2-6h4z" fill="#f4f4f8" stroke="#333"/></svg>
  </div>
</body>
</html>
